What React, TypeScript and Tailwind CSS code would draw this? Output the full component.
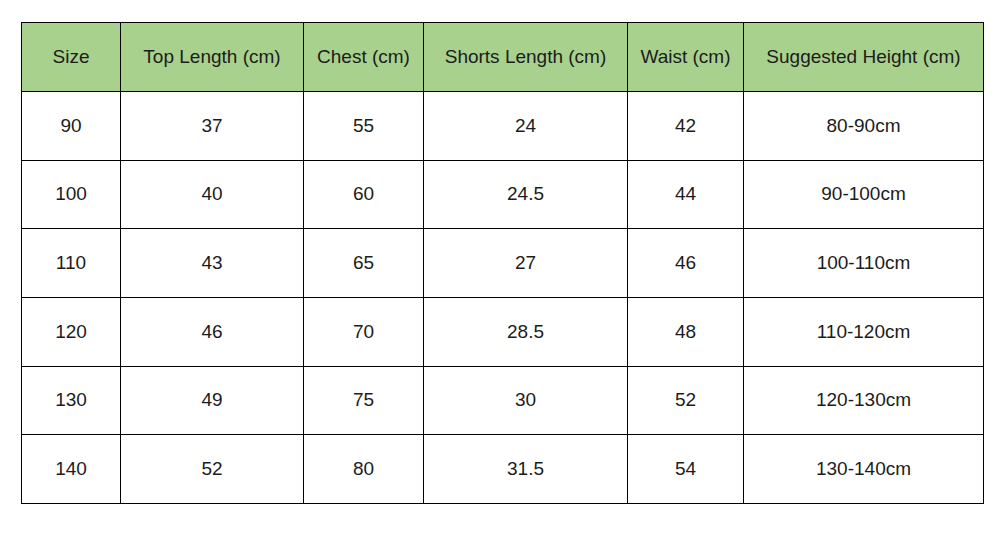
const headers = [
  "Size",
  "Top Length (cm)",
  "Chest (cm)",
  "Shorts Length (cm)",
  "Waist (cm)",
  "Suggested Height (cm)",
];

const rows = [
  ["90", "37", "55", "24", "42", "80-90cm"],
  ["100", "40", "60", "24.5", "44", "90-100cm"],
  ["110", "43", "65", "27", "46", "100-110cm"],
  ["120", "46", "70", "28.5", "48", "110-120cm"],
  ["130", "49", "75", "30", "52", "120-130cm"],
  ["140", "52", "80", "31.5", "54", "130-140cm"],
];

// column widths measured off the chart
const widths = ["w-[99px]", "w-[183px]", "w-[120px]", "w-[204px]", "w-[116px]", "w-[240px]"];

export default function App() {
  return (
    <div className="w-[1004px] h-[537px] bg-white pt-[22px] pl-[21px] font-['Liberation_Sans',Arial,sans-serif] text-[19px] text-[#1c1c1c]">
      <table className="table-fixed border-collapse w-[963px]">
        <colgroup>
          {widths.map((w) => (
            <col key={w} className={w} />
          ))}
        </colgroup>
        <thead>
          <tr className="h-[69px] bg-[#a9d18e]">
            {headers.map((h) => (
              <th key={h} className="border border-black font-normal text-center">
                {h}
              </th>
            ))}
          </tr>
        </thead>
        <tbody>
          {rows.map((r) => (
            <tr key={r[0]} className="h-[68.7px]">
              {r.map((c, i) => (
                <td key={i} className="border border-black text-center">
                  {c}
                </td>
              ))}
            </tr>
          ))}
        </tbody>
      </table>
    </div>
  );
}
